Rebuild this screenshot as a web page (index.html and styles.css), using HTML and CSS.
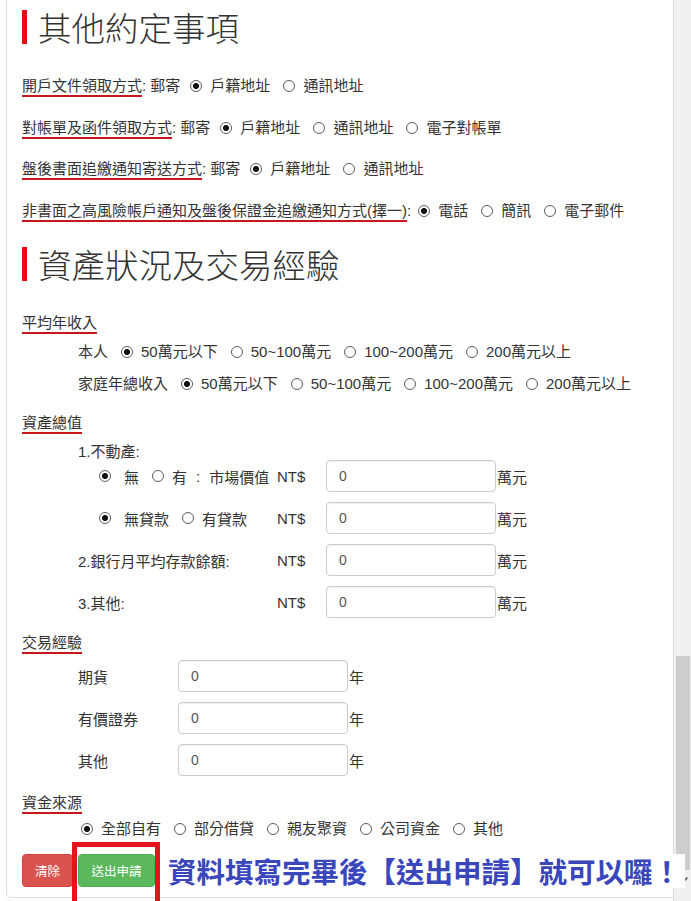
FILE: index.html
```html
<!DOCTYPE html>
<html lang="zh-Hant">
<head>
<meta charset="utf-8">
<title>資產狀況及交易經驗</title>
<link rel="stylesheet" href="styles.css">
</head>
<body>
<div class="frame">
  <div class="panel">
    <h2 class="sec-title sec-1">其他約定事項</h2>

    <div class="line line-1"><span class="ul">開戶文件領取方式</span>: 郵寄<label class="opt opt-after"><input class="radio" type="radio" name="r1" checked><span>戶籍地址</span></label><label class="opt"><input class="radio" type="radio" name="r1"><span>通訊地址</span></label></div>

    <div class="line line-2"><span class="ul">對帳單及函件領取方式</span>: 郵寄<label class="opt opt-after"><input class="radio" type="radio" name="r2" checked><span>戶籍地址</span></label><label class="opt"><input class="radio" type="radio" name="r2"><span>通訊地址</span></label><label class="opt"><input class="radio" type="radio" name="r2"><span>電子對帳單</span></label></div>

    <div class="line line-3"><span class="ul">盤後書面追繳通知寄送方式</span>: 郵寄<label class="opt opt-after"><input class="radio" type="radio" name="r3" checked><span>戶籍地址</span></label><label class="opt"><input class="radio" type="radio" name="r3"><span>通訊地址</span></label></div>

    <div class="line line-4"><span class="ul">非書面之高風險帳戶通知及盤後保證金追繳通知方式(擇一)</span>:<label class="opt opt-tight"><input class="radio" type="radio" name="r4" checked><span>電話</span></label><label class="opt"><input class="radio" type="radio" name="r4"><span>簡訊</span></label><label class="opt"><input class="radio" type="radio" name="r4"><span>電子郵件</span></label></div>

    <h2 class="sec-title sec-2">資產狀況及交易經驗</h2>

    <div class="line sub-title st-income"><span class="ul">平均年收入</span></div>
    <div class="line indent inc-1"><span>本人</span><label class="opt"><input class="radio" type="radio" name="i1" checked><span>50萬元以下</span></label><label class="opt"><input class="radio" type="radio" name="i1"><span>50~100萬元</span></label><label class="opt"><input class="radio" type="radio" name="i1"><span>100~200萬元</span></label><label class="opt"><input class="radio" type="radio" name="i1"><span>200萬元以上</span></label></div>
    <div class="line indent inc-2"><span>家庭年總收入</span><label class="opt"><input class="radio" type="radio" name="i2" checked><span>50萬元以下</span></label><label class="opt"><input class="radio" type="radio" name="i2"><span>50~100萬元</span></label><label class="opt"><input class="radio" type="radio" name="i2"><span>100~200萬元</span></label><label class="opt"><input class="radio" type="radio" name="i2"><span>200萬元以上</span></label></div>

    <div class="line sub-title st-asset"><span class="ul">資產總值</span></div>
    <div class="line indent re-title">1.不動產:</div>

    <div class="field-row indent ar-1">
      <div class="asset-label with-radio">
        <label class="aopt aopt-first"><input class="radio" type="radio" name="a1" checked><span>無</span></label><label class="aopt"><input class="radio" type="radio" name="a1"><span>有</span></label><span class="mkt-colon">:</span><span>市場價值</span>
      </div>
      <span class="nt">NT$</span><input class="box" type="text" value="0"><span class="unit">萬元</span>
    </div>
    <div class="field-row indent ar-n">
      <div class="asset-label with-radio">
        <label class="aopt aopt-first"><input class="radio" type="radio" name="a2" checked><span>無貸款</span></label><label class="aopt"><input class="radio" type="radio" name="a2"><span>有貸款</span></label>
      </div>
      <span class="nt">NT$</span><input class="box" type="text" value="0"><span class="unit">萬元</span>
    </div>
    <div class="field-row indent ar-n">
      <div class="asset-label">2.銀行月平均存款餘額:</div>
      <span class="nt">NT$</span><input class="box" type="text" value="0"><span class="unit">萬元</span>
    </div>
    <div class="field-row indent ar-n">
      <div class="asset-label">3.其他:</div>
      <span class="nt">NT$</span><input class="box" type="text" value="0"><span class="unit">萬元</span>
    </div>

    <div class="line sub-title st-exp"><span class="ul">交易經驗</span></div>
    <div class="field-row indent ex-1">
      <div class="exp-label">期貨</div><input class="box" type="text" value="0"><span class="unit">年</span>
    </div>
    <div class="field-row indent ar-n">
      <div class="exp-label">有價證券</div><input class="box" type="text" value="0"><span class="unit">年</span>
    </div>
    <div class="field-row indent ar-n">
      <div class="exp-label">其他</div><input class="box" type="text" value="0"><span class="unit">年</span>
    </div>

    <div class="line sub-title st-fund"><span class="ul">資金來源</span></div>
    <div class="line fund-row"><label class="opt opt-start"><input class="radio" type="radio" name="f1" checked><span>全部自有</span></label><label class="opt"><input class="radio" type="radio" name="f1"><span>部分借貸</span></label><label class="opt"><input class="radio" type="radio" name="f1"><span>親友聚資</span></label><label class="opt"><input class="radio" type="radio" name="f1"><span>公司資金</span></label><label class="opt"><input class="radio" type="radio" name="f1"><span>其他</span></label></div>

    <div class="actions">
      <button class="btn btn-clear" type="button">清除</button>
      <button class="btn btn-submit" type="button">送出申請</button>
      <span class="callout-box"></span>
      <span class="callout-text">資料填寫完畢後【送出申請】就可以囉！</span>
    </div>
  </div>

  <div class="scrollbar">
    <div class="thumb"></div>
    <svg class="arrow" width="12" height="8" viewBox="0 0 12 8"><path d="M1.5 1.5 L6 6 L10.5 1.5" fill="none" stroke="#5a5a5a" stroke-width="1.6"/></svg>
  </div>
</div>
</body>
</html>
```

FILE: styles.css
```css
html, body {
  margin: 0;
  padding: 0;
  background: #fff;
}

body {
  font-family: "Liberation Sans", "Noto Sans CJK TC", sans-serif;
  font-size: 15px;
  color: #333;
}

.frame {
  display: flex;
  height: 901px;
  overflow: hidden;
}

.panel {
  flex: 1;
  min-width: 0;
  margin-left: 6px;
  align-self: flex-start;
  border-left: 1px solid #dddddd;
  border-bottom: 1px solid #dddddd;
  border-bottom-left-radius: 5px;
  padding: 0 0 10px 15px;
  display: flex;
  flex-direction: column;
  align-items: flex-start;
}

.sec-title {
  margin: 0;
  height: 34px;
  line-height: 34px;
  font-family: "Noto Sans CJK TC", sans-serif;
  font-size: 33.5px;
  font-weight: 300;
  color: #333;
  border-left: 5px solid #e50a14;
  padding-left: 11px;
  white-space: nowrap;
}

.sec-1 { margin-top: 10px; }
.sec-2 { margin-top: 26px; }

.line {
  display: flex;
  align-items: center;
  height: 20px;
  line-height: 20px;
  white-space: nowrap;
}

.line-1 { margin-top: 32px; }
.line-2 { margin-top: 22px; }
.line-3 { margin-top: 21px; }
.line-4 { margin-top: 22px; }

.ul {
  text-decoration: underline;
  text-decoration-color: #c8161d;
  text-decoration-thickness: 2px;
  text-underline-offset: 4px;
}

.opt {
  display: inline-flex;
  align-items: center;
  margin-left: 13px;
}

.opt-after { margin-left: 10px; }
.opt-tight { margin-left: 7px; }
.opt-start { margin-left: 0; }

.radio {
  appearance: none;
  -webkit-appearance: none;
  width: 12px;
  height: 12px;
  margin: 0 8px 0 0;
  border: 1px solid #5c5c5c;
  border-radius: 50%;
  background: #fff;
  flex: none;
}

.radio:checked {
  background: radial-gradient(circle, #111 0 2.7px, #fff 3.3px);
}

.indent { margin-left: 56px; }

.st-income { margin-top: 32px; }
.inc-1 { margin-top: 9px; }
.inc-2 { margin-top: 12px; }
.st-asset { margin-top: 19px; }

.re-title {
  margin-top: 11px;
  height: 16px;
}

.field-row {
  display: flex;
  align-items: center;
  height: 32px;
  white-space: nowrap;
}

.ar-1 { margin-top: 0; }
.ar-n { margin-top: 10px; }

.asset-label {
  width: 199px;
  display: flex;
  align-items: center;
}

.with-radio { padding-left: 21px; box-sizing: border-box; }

.aopt {
  display: inline-flex;
  align-items: center;
  margin-left: 13px;
}

.aopt .radio { margin-right: 8px; }
.aopt-first { margin-left: 0; }
.aopt-first .radio { margin-right: 13px; }

.mkt-colon {
  margin-left: 9px;
  margin-right: 9px;
}

.nt {
  width: 49px;
  color: #333;
}

.box {
  box-sizing: border-box;
  width: 170px;
  height: 32px;
  margin: 0;
  padding: 0 12px;
  border: 1px solid #cccccc;
  border-radius: 4px;
  box-shadow: inset 0 1px 1px rgba(0, 0, 0, 0.06);
  font-family: "Liberation Sans", "Noto Sans CJK TC", sans-serif;
  font-size: 14px;
  color: #555;
  background: #fff;
}

.unit { margin-left: 1px; }

.exp-label { width: 100px; }

.st-exp { margin-top: 15px; }
.ex-1 { margin-top: 7px; }

.st-fund { margin-top: 17px; }

.fund-row {
  margin-top: 6px;
  margin-left: 59px;
}

.actions {
  position: relative;
  margin-top: 15px;
  display: flex;
  align-items: center;
  height: 33px;
}

.btn {
  box-sizing: border-box;
  height: 33px;
  padding: 0;
  border-radius: 4px;
  font-family: "Liberation Sans", "Noto Sans CJK TC", sans-serif;
  font-size: 12.5px;
  color: #fff;
  text-align: center;
  white-space: nowrap;
  cursor: pointer;
}

.btn-clear {
  width: 51px;
  background: #d9534f;
  border: 1px solid #d43f3a;
}

.btn-submit {
  width: 77px;
  margin-left: 5px;
  background: #5cb85c;
  border: 1px solid #4cae4c;
}

.callout-box {
  position: absolute;
  left: 50px;
  top: -12px;
  width: 88px;
  height: 72px;
  box-sizing: border-box;
  border: 5px solid #e3141c;
}

.callout-text {
  position: relative;
  z-index: 2;
  margin-left: 13px;
  padding-right: 4px;
  background: #fff;
  font-family: "Noto Sans CJK TC", sans-serif;
  font-weight: 700;
  font-size: 28.5px;
  line-height: 34px;
  color: #3a46bb;
  white-space: nowrap;
}

.scrollbar {
  width: 17px;
  flex: none;
  border-left: 1px solid #dcdcdc;
  background: #f0f0f0;
  display: flex;
  flex-direction: column;
  align-items: center;
}

.thumb {
  margin-top: 656px;
  width: 14px;
  height: 214px;
  background: #cdcdcd;
}

.arrow {
  margin-top: 6px;
}
```
